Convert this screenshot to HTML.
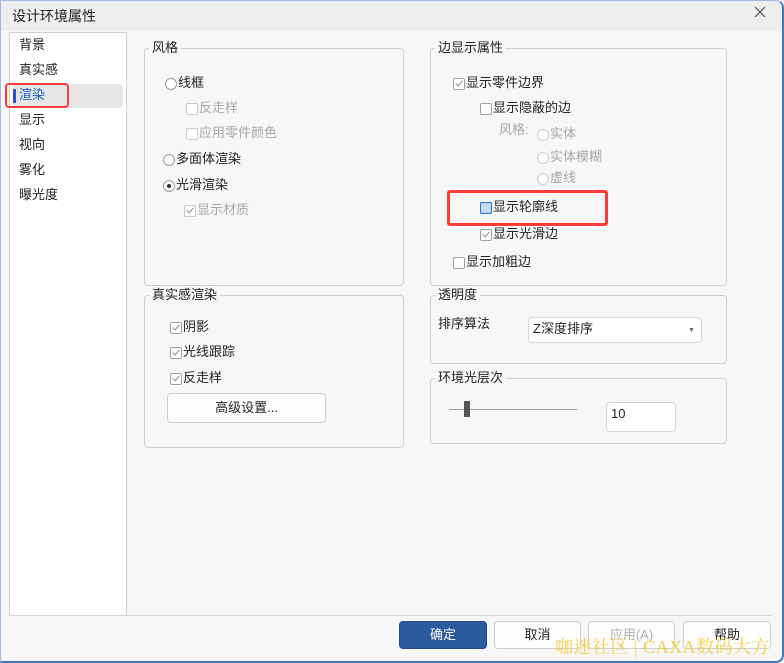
<!DOCTYPE html><html><head><meta charset="utf-8"><style>
body{margin:0;width:784px;height:663px;overflow:hidden;font-family:"Liberation Sans","Noto Sans CJK SC",sans-serif;font-size:13px;line-height:16px;color:#222;background:#fff;position:relative}
.win{position:absolute;left:0;top:0;width:784px;height:663px;background:#f7f7f7;overflow:hidden}
.bd{position:absolute;left:0;top:0;border:1px solid #9dbbe3;border-right:2px solid #3a78c9;border-bottom:2px solid #3a78c9;border-radius:0 8px 8px 0;box-sizing:border-box;width:784px;height:663px;pointer-events:none}
.title{position:absolute;left:0;top:0;width:100%;height:31px;background:#eeeeee}
.a{position:absolute;white-space:nowrap;margin-top:-1px}
.g{position:absolute;border:1px solid #cfcfcf;border-radius:4px}
.gl{position:absolute;background:#f7f7f7;padding:0 3px;top:-9px;left:4px;line-height:16px}
.dis{color:#a8a8a8}
.cb{position:absolute;width:10px;height:10px;border:1px solid #a0a0a0;border-radius:2px;background:#fff}
.cb.d{border-color:#c8c8c8}
.cb.k::after{content:"";position:absolute;left:3px;top:0px;width:3px;height:6px;border:solid #888;border-width:0 1.5px 1.5px 0;transform:rotate(40deg)}
.rb{position:absolute;width:10px;height:10px;border:1px solid #999;border-radius:50%;background:#fff}
.rb.d{border-color:#ccc}
.rb.s::after{content:"";position:absolute;left:3px;top:3px;width:4px;height:4px;border-radius:50%;background:#333}
.btn{position:absolute;height:26px;border:1px solid #cfcfcf;border-radius:4px;background:#fdfdfd;text-align:center;line-height:26px}
</style></head><body><div class="win">
<div class="title"></div>
<div class="a" style="left:12px;top:9px;font-size:14px">设计环境属性</div>
<svg style="position:absolute;left:754px;top:6px" width="12" height="12"><path d="M1 1L11 11M11 1L1 11" stroke="#555" stroke-width="1.2"/></svg>
<div style="position:absolute;left:9px;top:32px;width:116px;height:582px;background:#fff;border:1px solid #d0d0d0"></div>
<div style="position:absolute;left:13px;top:84px;width:110px;height:24px;background:#e6e6e6;border-radius:4px"></div>
<div style="position:absolute;left:13px;top:89px;width:3px;height:14px;background:#1a5dc8"></div>
<div style="position:absolute;left:5px;top:83px;width:60px;height:21px;border:2.5px solid #ff3a3a;border-radius:4px"></div>
<div class="a" style="left:19px;top:38px">背景</div>
<div class="a" style="left:19px;top:63px">真实感</div>
<div class="a" style="left:19px;top:88px;color:#1a5dc8">渲染</div>
<div class="a" style="left:19px;top:113px">显示</div>
<div class="a" style="left:19px;top:138px">视向</div>
<div class="a" style="left:19px;top:163px">雾化</div>
<div class="a" style="left:19px;top:188px">曝光度</div>

<div class="g" style="left:144px;top:48px;width:258px;height:236px"><div class="gl">风格</div></div>
<div class="rb" style="left:165px;top:78px"></div><div class="a" style="left:178px;top:76px">线框</div>
<div class="cb d" style="left:186px;top:103px"></div><div class="a dis" style="left:199px;top:101px">反走样</div>
<div class="cb d" style="left:186px;top:128px"></div><div class="a dis" style="left:199px;top:126px">应用零件颜色</div>
<div class="rb" style="left:163px;top:154px"></div><div class="a" style="left:176px;top:152px">多面体渲染</div>
<div class="rb s" style="left:163px;top:180px"></div><div class="a" style="left:176px;top:178px">光滑渲染</div>
<div class="cb d k" style="left:184px;top:205px"></div><div class="a dis" style="left:197px;top:203px">显示材质</div>

<div class="g" style="left:430px;top:48px;width:295px;height:236px"><div class="gl">边显示属性</div></div>
<div class="cb k" style="left:453px;top:78px"></div><div class="a" style="left:466px;top:76px">显示零件边界</div>
<div class="cb" style="left:480px;top:103px"></div><div class="a" style="left:493px;top:101px">显示隐蔽的边</div>
<div class="a dis" style="left:499px;top:123px">风格:</div>
<div class="rb d" style="left:537px;top:129px"></div><div class="a dis" style="left:550px;top:127px">实体</div>
<div class="rb d" style="left:537px;top:152px"></div><div class="a dis" style="left:550px;top:150px">实体模糊</div>
<div class="rb d" style="left:537px;top:173px"></div><div class="a dis" style="left:550px;top:171px">虚线</div>
<div style="position:absolute;left:447px;top:190px;width:155px;height:30px;border:3px solid #ff3a3a;border-radius:3px"></div>
<div class="cb" style="left:480px;top:202px;background:#c5d9f3;border-color:#2a6ccc"></div><div class="a" style="left:493px;top:200px">显示轮廓线</div>
<div class="cb k" style="left:480px;top:229px"></div><div class="a" style="left:493px;top:227px">显示光滑边</div>
<div class="cb" style="left:453px;top:257px"></div><div class="a" style="left:466px;top:255px">显示加粗边</div>

<div class="g" style="left:144px;top:295px;width:258px;height:151px"><div class="gl">真实感渲染</div></div>
<div class="cb k" style="left:170px;top:322px"></div><div class="a" style="left:183px;top:320px">阴影</div>
<div class="cb k" style="left:170px;top:347px"></div><div class="a" style="left:183px;top:345px">光线跟踪</div>
<div class="cb k" style="left:170px;top:373px"></div><div class="a" style="left:183px;top:371px">反走样</div>
<div class="btn" style="left:167px;top:393px;width:157px;height:28px;line-height:28px">高级设置...</div>

<div class="g" style="left:430px;top:295px;width:295px;height:67px"><div class="gl">透明度</div></div>
<div class="a" style="left:438px;top:317px">排序算法</div>
<div style="position:absolute;left:528px;top:317px;width:172px;height:24px;background:#fff;border:1px solid #d5d5d5;border-radius:4px"></div>
<div class="a" style="left:533px;top:322px">Z深度排序</div>
<div class="a" style="left:688px;top:324px;font-size:7px;color:#666">▼</div>

<div class="g" style="left:430px;top:378px;width:295px;height:64px"><div class="gl">环境光层次</div></div>
<div style="position:absolute;left:449px;top:409px;width:128px;height:1px;background:#999"></div>
<div style="position:absolute;left:464px;top:401px;width:6px;height:16px;background:#555"></div>
<div style="position:absolute;left:606px;top:402px;width:68px;height:28px;background:#fff;border:1px solid #d5d5d5;border-radius:4px"></div>
<div class="a" style="left:611px;top:407px">10</div>

<div style="position:absolute;left:9px;top:615px;width:763px;height:1px;background:#d5d5d5"></div>
<div class="btn" style="left:399px;top:621px;width:86px;background:#2c5a9e;border-color:#234c8a;color:#fff">确定</div>
<div class="btn" style="left:494px;top:621px;width:85px">取消</div>
<div class="btn dis" style="left:588px;top:621px;width:85px;color:#b0b0b0">应用(A)</div>
<div class="btn" style="left:683px;top:621px;width:86px">帮助</div>
<div class="a" style="left:555px;top:638px;font-family:'Liberation Serif','Noto Serif CJK SC',serif;font-size:18px;line-height:20px;letter-spacing:0.5px;color:rgba(245,200,40,.85)">咖迷社区 | CAXA数码大方</div>
<div class="bd"></div>
</div></body></html>
